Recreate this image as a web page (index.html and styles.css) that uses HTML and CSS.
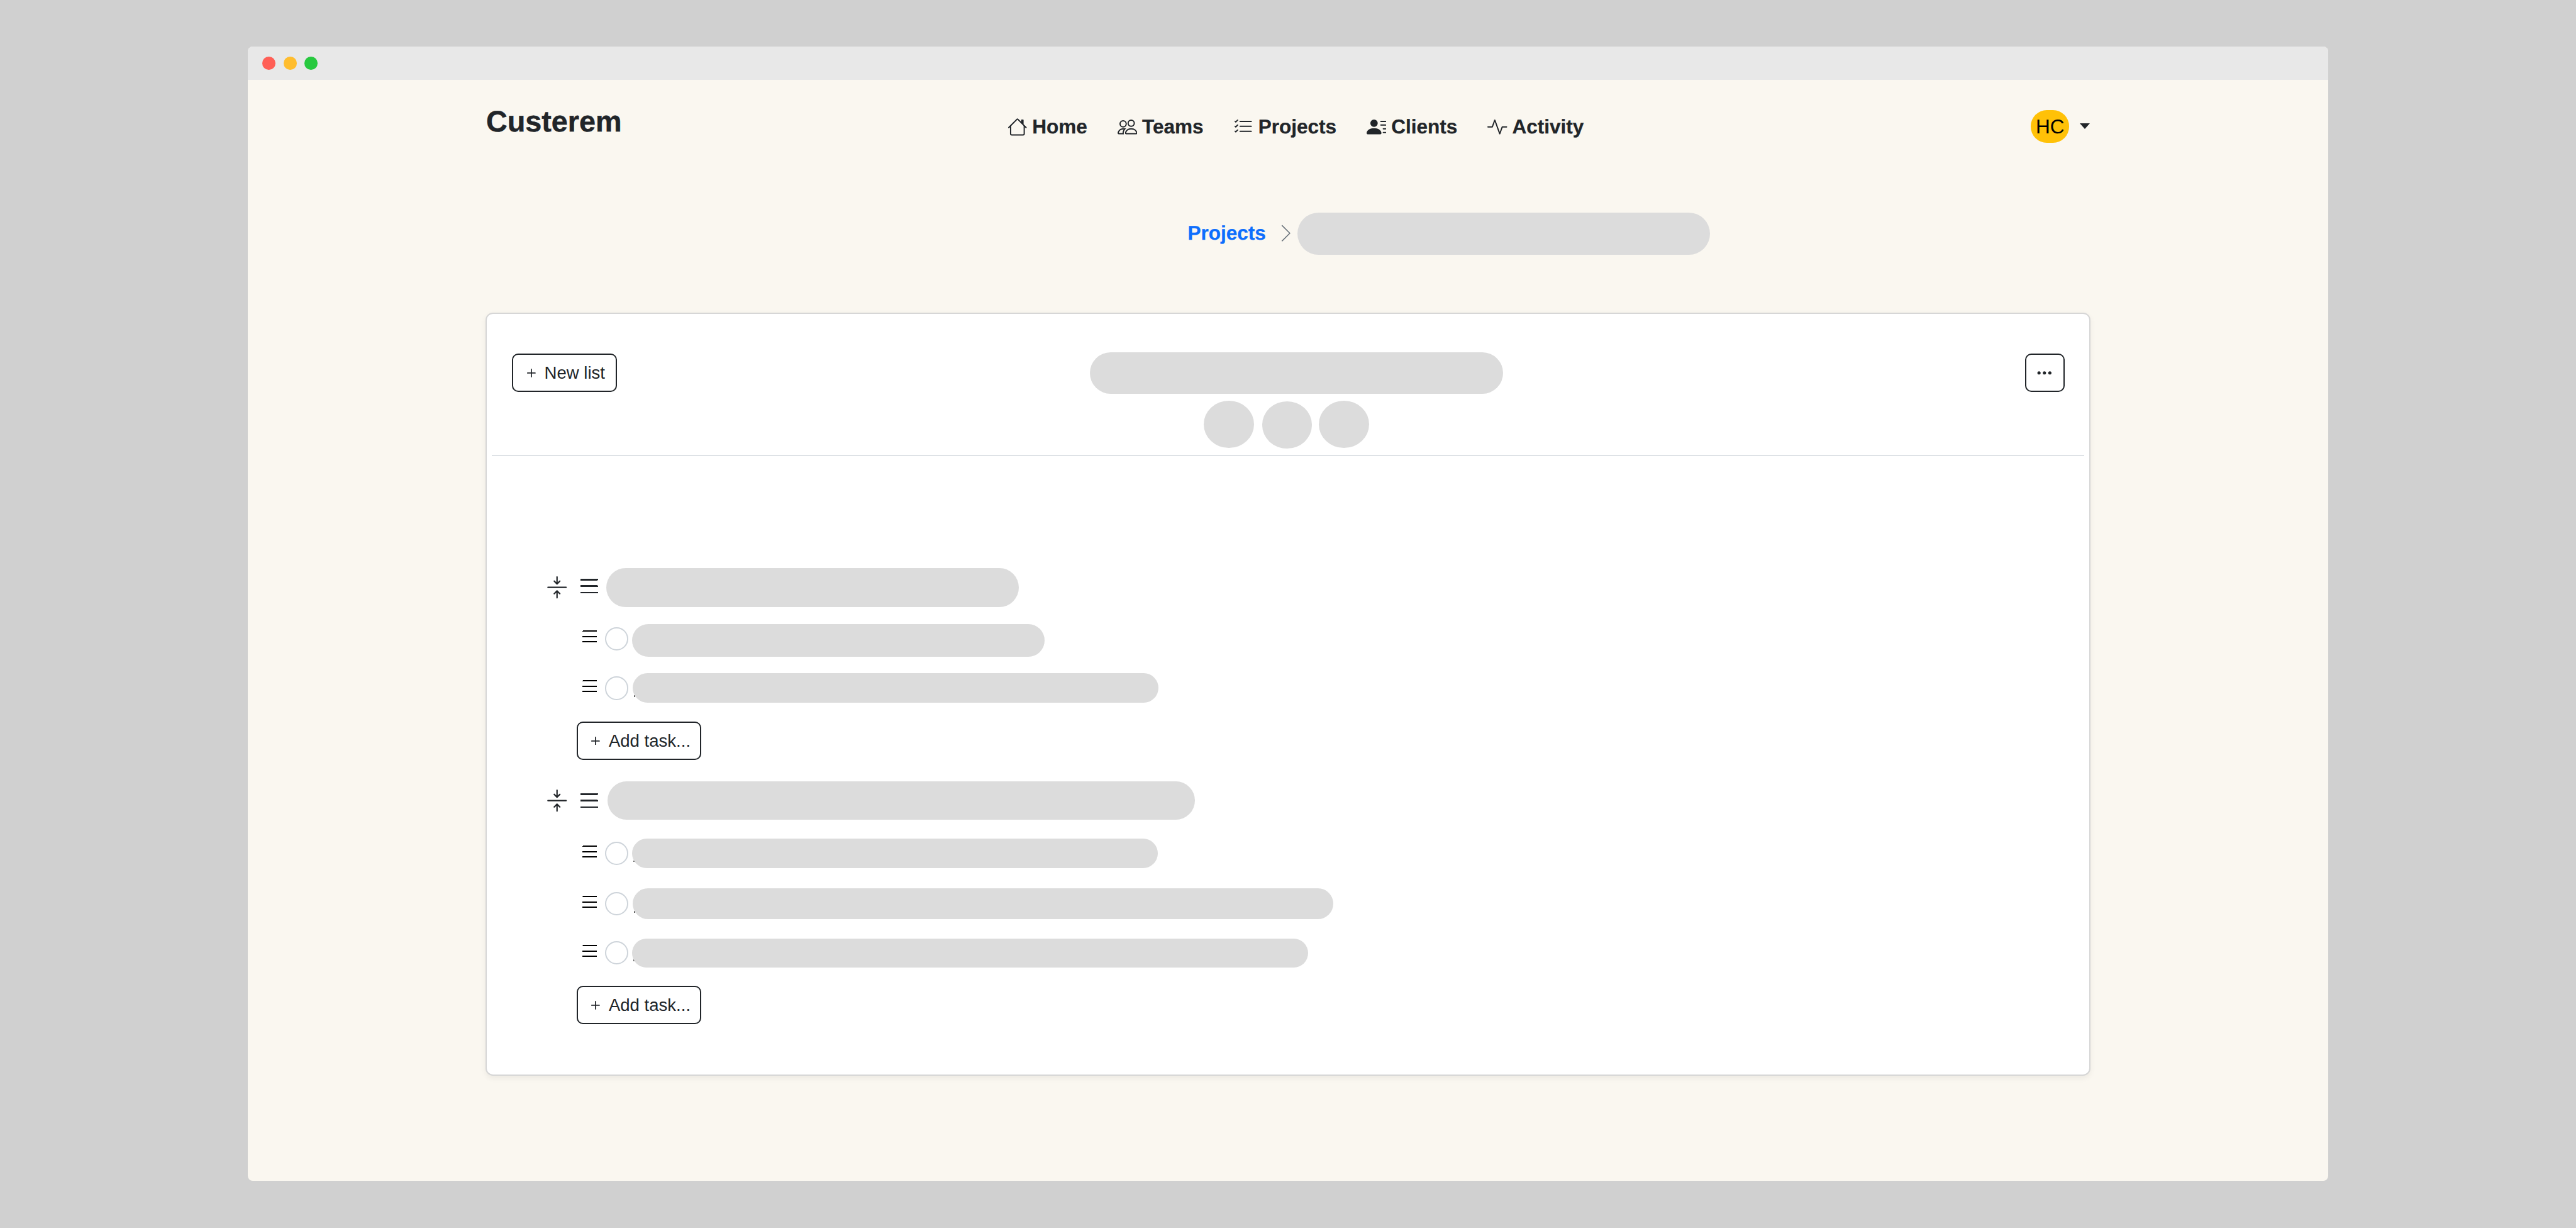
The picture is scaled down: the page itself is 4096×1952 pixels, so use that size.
FILE: index.html
```html
<!DOCTYPE html>
<html lang="en">
<head>
<meta charset="utf-8">
<title>Custerem</title>
<link rel="stylesheet" href="styles.css">
</head>
<body>
<div class="page">
  <div class="window">
    <div class="titlebar">
      <span class="light light-red"></span>
      <span class="light light-yellow"></span>
      <span class="light light-green"></span>
    </div>
    <div class="content">
      <header class="header">
        <div class="logo">Custerem</div>
        <nav class="nav">
          <a class="nav-item"><svg class="nav-icon" viewBox="0 0 16 16" fill="currentColor"><path d="M8.707 1.5a1 1 0 0 0-1.414 0L.646 8.146a.5.5 0 0 0 .708.708L2 8.207V13.5A1.5 1.5 0 0 0 3.5 15h9a1.5 1.5 0 0 0 1.5-1.5V8.207l.646.647a.5.5 0 0 0 .708-.708L13 5.793V2.5a.5.5 0 0 0-.5-.5h-1a.5.5 0 0 0-.5.5v1.293zM13 7.207V13.5a.5.5 0 0 1-.5.5h-9a.5.5 0 0 1-.5-.5V7.207l5-5z"/></svg>Home</a>
          <a class="nav-item"><svg class="nav-icon" viewBox="0 0 16 16" fill="currentColor"><path d="M15 14s1 0 1-1-1-4-5-4-5 3-5 4 1 1 1 1zm-7.978-1L7 12.996c.001-.264.167-1.03.76-1.72C8.312 10.629 9.282 10 11 10c1.717 0 2.687.63 3.24 1.276.593.69.758 1.457.76 1.72l-.008.002-.014.002H7.022ZM11 7a2 2 0 1 0 0-4 2 2 0 0 0 0 4m3-2a3 3 0 1 1-6 0 3 3 0 0 1 6 0M6.936 9.28a6 6 0 0 0-1.23-.247A7 7 0 0 0 5 9c-4 0-5 3-5 4q0 1 1 1h4.216A2.24 2.24 0 0 1 5 13c0-1.01.377-2.042 1.09-2.904.243-.294.526-.569.846-.816M4.92 10A5.5 5.5 0 0 0 4 13H1c0-.26.164-1.03.76-1.724.545-.636 1.492-1.256 3.16-1.275ZM1.5 5.5a3 3 0 1 1 6 0 3 3 0 0 1-6 0m3-2a2 2 0 1 0 0 4 2 2 0 0 0 0-4"/></svg>Teams</a>
          <a class="nav-item"><svg class="nav-icon" viewBox="0 0 16 16" fill="currentColor"><path fill-rule="evenodd" d="M5 11.5a.5.5 0 0 1 .5-.5h9a.5.5 0 0 1 0 1h-9a.5.5 0 0 1-.5-.5m0-4a.5.5 0 0 1 .5-.5h9a.5.5 0 0 1 0 1h-9a.5.5 0 0 1-.5-.5m0-4a.5.5 0 0 1 .5-.5h9a.5.5 0 0 1 0 1h-9a.5.5 0 0 1-.5-.5M3.854 2.146a.5.5 0 0 1 0 .708l-1.5 1.5a.5.5 0 0 1-.708 0l-.5-.5a.5.5 0 1 1 .708-.708L2 3.293l1.146-1.147a.5.5 0 0 1 .708 0m0 4a.5.5 0 0 1 0 .708l-1.5 1.5a.5.5 0 0 1-.708 0l-.5-.5a.5.5 0 1 1 .708-.708L2 7.293l1.146-1.147a.5.5 0 0 1 .708 0m0 4a.5.5 0 0 1 0 .708l-1.5 1.5a.5.5 0 0 1-.708 0l-.5-.5a.5.5 0 0 1 .708-.708l.146.147 1.146-1.147a.5.5 0 0 1 .708 0"/></svg>Projects</a>
          <a class="nav-item"><svg class="nav-icon" viewBox="0 0 16 16" fill="currentColor"><path d="M6 8a3 3 0 1 0 0-6 3 3 0 0 0 0 6m-5 6s-1 0-1-1 1-4 6-4 6 3 6 4-1 1-1 1zM11 3.5a.5.5 0 0 1 .5-.5h4a.5.5 0 0 1 0 1h-4a.5.5 0 0 1-.5-.5m.5 2.5a.5.5 0 0 0 0 1h4a.5.5 0 0 0 0-1zm2 3a.5.5 0 0 0 0 1h2a.5.5 0 0 0 0-1zm0 3a.5.5 0 0 0 0 1h2a.5.5 0 0 0 0-1z"/></svg>Clients</a>
          <a class="nav-item"><svg class="nav-icon" viewBox="0 0 16 16" fill="currentColor"><path fill-rule="evenodd" d="M6 2a.5.5 0 0 1 .47.33L10 12.036l1.53-4.208A.5.5 0 0 1 12 7.5h3.5a.5.5 0 0 1 0 1h-3.15l-1.88 5.17a.5.5 0 0 1-.94 0L6 3.964 4.47 8.171A.5.5 0 0 1 4 8.5H.5a.5.5 0 0 1 0-1h3.15l1.88-5.17A.5.5 0 0 1 6 2"/></svg>Activity</a>
        </nav>
        <div class="user">
          <span class="avatar">HC</span>
          <span class="caret"></span>
        </div>
      </header>

      <div class="breadcrumb">
        <a class="crumb-link">Projects</a>
        <svg class="crumb-chevron" viewBox="0 0 16 16" fill="none" stroke="currentColor" stroke-width="0.8"><path d="M4.7 1.6 11.1 8 4.7 14.4"/></svg>
        <div class="pill crumb-pill"></div>
      </div>

      <section class="card">
        <div class="card-head">
          <button class="btn btn-new"><svg class="plus" viewBox="4 4 8 8" fill="currentColor"><path d="M8 4a.5.5 0 0 1 .5.5v3h3a.5.5 0 0 1 0 1h-3v3a.5.5 0 0 1-1 0v-3h-3a.5.5 0 0 1 0-1h3v-3A.5.5 0 0 1 8 4"/></svg>New list</button>
          <div class="head-center">
            <div class="pill title-pill"></div>
            <div class="members">
              <span class="member"></span>
              <span class="member member-mid"></span>
              <span class="member"></span>
            </div>
          </div>
          <button class="btn btn-more"><svg class="dots" viewBox="0 0 16 16" fill="currentColor"><path d="M3 9.5a1.5 1.5 0 1 1 0-3 1.5 1.5 0 0 1 0 3m5 0a1.5 1.5 0 1 1 0-3 1.5 1.5 0 0 1 0 3m5 0a1.5 1.5 0 1 1 0-3 1.5 1.5 0 0 1 0 3"/></svg></button>
        </div>

        <div class="card-body">
          <div class="list-head list-head-raised">
            <svg class="collapse" viewBox="0 0 16 16" fill="currentColor"><path fill-rule="evenodd" d="M1 8a.5.5 0 0 1 .5-.5h13a.5.5 0 0 1 0 1h-13A.5.5 0 0 1 1 8m7-8a.5.5 0 0 1 .5.5v3.793l1.146-1.147a.5.5 0 0 1 .708.708l-2 2a.5.5 0 0 1-.708 0l-2-2a.5.5 0 1 1 .708-.708L7.5 4.293V.5A.5.5 0 0 1 8 0m-.5 11.707-1.146 1.147a.5.5 0 0 1-.708-.708l2-2a.5.5 0 0 1 .708 0l2 2a.5.5 0 0 1-.708.708L8.5 11.707V15.5a.5.5 0 0 1-1 0z"/></svg>
            <svg class="grip grip-head" viewBox="0 0 16 16" fill="currentColor"><path fill-rule="evenodd" d="M2.5 12a.5.5 0 0 1 .5-.5h10a.5.5 0 0 1 0 1H3a.5.5 0 0 1-.5-.5m0-4a.5.5 0 0 1 .5-.5h10a.5.5 0 0 1 0 1H3a.5.5 0 0 1-.5-.5m0-4a.5.5 0 0 1 .5-.5h10a.5.5 0 0 1 0 1H3a.5.5 0 0 1-.5-.5"/></svg>
            <div class="pill" style="width:666px;height:63px"></div>
          </div>

          <div class="task task-raised gap-28">
            <svg class="grip grip-task" viewBox="0 0 16 16" fill="currentColor"><path fill-rule="evenodd" d="M2.5 12a.5.5 0 0 1 .5-.5h10a.5.5 0 0 1 0 1H3a.5.5 0 0 1-.5-.5m0-4a.5.5 0 0 1 .5-.5h10a.5.5 0 0 1 0 1H3a.5.5 0 0 1-.5-.5m0-4a.5.5 0 0 1 .5-.5h10a.5.5 0 0 1 0 1H3a.5.5 0 0 1-.5-.5"/></svg>
            <span class="check"></span>
            <div class="pill" style="width:666px;height:52px"></div>
          </div>
          <div class="task gap-27">
            <svg class="grip grip-task" viewBox="0 0 16 16" fill="currentColor"><path fill-rule="evenodd" d="M2.5 12a.5.5 0 0 1 .5-.5h10a.5.5 0 0 1 0 1H3a.5.5 0 0 1-.5-.5m0-4a.5.5 0 0 1 .5-.5h10a.5.5 0 0 1 0 1H3a.5.5 0 0 1-.5-.5m0-4a.5.5 0 0 1 .5-.5h10a.5.5 0 0 1 0 1H3a.5.5 0 0 1-.5-.5"/></svg>
            <span class="check"></span>
            <div class="pill pill-speck pill-nudge" style="width:849px;height:48px"></div>
          </div>
          <button class="btn btn-add gap-30"><svg class="plus" viewBox="4 4 8 8" fill="currentColor"><path d="M8 4a.5.5 0 0 1 .5.5v3h3a.5.5 0 0 1 0 1h-3v3a.5.5 0 0 1-1 0v-3h-3a.5.5 0 0 1 0-1h3v-3A.5.5 0 0 1 8 4"/></svg>Add task...</button>

          <div class="list-head gap-35">
            <svg class="collapse" viewBox="0 0 16 16" fill="currentColor"><path fill-rule="evenodd" d="M1 8a.5.5 0 0 1 .5-.5h13a.5.5 0 0 1 0 1h-13A.5.5 0 0 1 1 8m7-8a.5.5 0 0 1 .5.5v3.793l1.146-1.147a.5.5 0 0 1 .708.708l-2 2a.5.5 0 0 1-.708 0l-2-2a.5.5 0 1 1 .708-.708L7.5 4.293V.5A.5.5 0 0 1 8 0m-.5 11.707-1.146 1.147a.5.5 0 0 1-.708-.708l2-2a.5.5 0 0 1 .708 0l2 2a.5.5 0 0 1-.708.708L8.5 11.707V15.5a.5.5 0 0 1-1 0z"/></svg>
            <svg class="grip grip-head" viewBox="0 0 16 16" fill="currentColor"><path fill-rule="evenodd" d="M2.5 12a.5.5 0 0 1 .5-.5h10a.5.5 0 0 1 0 1H3a.5.5 0 0 1-.5-.5m0-4a.5.5 0 0 1 .5-.5h10a.5.5 0 0 1 0 1H3a.5.5 0 0 1-.5-.5m0-4a.5.5 0 0 1 .5-.5h10a.5.5 0 0 1 0 1H3a.5.5 0 0 1-.5-.5"/></svg>
            <div class="pill pill-nudge-head" style="width:949px;height:61px"></div>
          </div>

          <div class="task gap-31">
            <svg class="grip grip-task" viewBox="0 0 16 16" fill="currentColor"><path fill-rule="evenodd" d="M2.5 12a.5.5 0 0 1 .5-.5h10a.5.5 0 0 1 0 1H3a.5.5 0 0 1-.5-.5m0-4a.5.5 0 0 1 .5-.5h10a.5.5 0 0 1 0 1H3a.5.5 0 0 1-.5-.5m0-4a.5.5 0 0 1 .5-.5h10a.5.5 0 0 1 0 1H3a.5.5 0 0 1-.5-.5"/></svg>
            <span class="check"></span>
            <div class="pill pill-speck" style="width:849px;height:48px"></div>
          </div>
          <div class="task gap-32">
            <svg class="grip grip-task" viewBox="0 0 16 16" fill="currentColor"><path fill-rule="evenodd" d="M2.5 12a.5.5 0 0 1 .5-.5h10a.5.5 0 0 1 0 1H3a.5.5 0 0 1-.5-.5m0-4a.5.5 0 0 1 .5-.5h10a.5.5 0 0 1 0 1H3a.5.5 0 0 1-.5-.5m0-4a.5.5 0 0 1 .5-.5h10a.5.5 0 0 1 0 1H3a.5.5 0 0 1-.5-.5"/></svg>
            <span class="check"></span>
            <div class="pill pill-speck pill-nudge" style="width:1131px;height:50px"></div>
          </div>
          <div class="task gap-31">
            <svg class="grip grip-task" viewBox="0 0 16 16" fill="currentColor"><path fill-rule="evenodd" d="M2.5 12a.5.5 0 0 1 .5-.5h10a.5.5 0 0 1 0 1H3a.5.5 0 0 1-.5-.5m0-4a.5.5 0 0 1 .5-.5h10a.5.5 0 0 1 0 1H3a.5.5 0 0 1-.5-.5m0-4a.5.5 0 0 1 .5-.5h10a.5.5 0 0 1 0 1H3a.5.5 0 0 1-.5-.5"/></svg>
            <span class="check"></span>
            <div class="pill pill-speck" style="width:1092px;height:47px"></div>
          </div>
          <button class="btn btn-add gap-30"><svg class="plus" viewBox="4 4 8 8" fill="currentColor"><path d="M8 4a.5.5 0 0 1 .5.5v3h3a.5.5 0 0 1 0 1h-3v3a.5.5 0 0 1-1 0v-3h-3a.5.5 0 0 1 0-1h3v-3A.5.5 0 0 1 8 4"/></svg>Add task...</button>
        </div>
      </section>
    </div>
  </div>
</div>
</body>
</html>
```
FILE: styles.css
```css
* { box-sizing: border-box; }

html, body {
  margin: 0;
  padding: 0;
  overflow: hidden;
  background: #d0d0d0;
}

.page {
  zoom: 0.98462;
  width: 4160px;
  height: 1982px;
  padding: 75px 400px 76px;
  font-family: "Liberation Sans", Arial, sans-serif;
  color: #212529;
  text-rendering: geometricPrecision;
}

.window {
  height: 100%;
  background: #faf7f0;
  border-radius: 8px;
  overflow: hidden;
}

.titlebar {
  height: 54px;
  background: #e8e8e8;
  display: flex;
  align-items: center;
  gap: 13px;
  padding-left: 24px;
}

.light {
  width: 21px;
  height: 21px;
  border-radius: 50%;
}
.light-red { background: #ff5f56; }
.light-yellow { background: #ffbd2e; }
.light-green { background: #27c93f; }

.content { padding: 0 385px; }

.header {
  display: flex;
  align-items: flex-start;
  padding-top: 39px;
  height: 214px;
}

.logo {
  font-size: 47.5px;
  font-weight: 700;
  line-height: 58px;
  -webkit-text-stroke: 0.5px #212529;
}

.nav {
  display: flex;
  gap: 48.6px;
  margin-left: 623px;
  margin-top: 17px;
}

.nav-item {
  display: flex;
  align-items: center;
  gap: 8px;
  font-size: 32px;
  font-weight: 700;
  line-height: 40px;
  -webkit-text-stroke: 0.3px #212529;
}

.nav-icon {
  width: 32px;
  height: 32px;
  flex: none;
}

.user {
  margin-left: auto;
  margin-top: 10px;
  display: flex;
  align-items: center;
  gap: 17px;
}

.avatar {
  width: 62px;
  height: 53px;
  border-radius: 26px;
  background: #ffc107;
  color: #000;
  font-size: 32px;
  line-height: 53px;
  text-align: center;
}

.caret {
  width: 0;
  height: 0;
  margin-bottom: 1px;
  border-top: 10px solid #212529;
  border-left: 9px solid transparent;
  border-right: 9px solid transparent;
}

.breadcrumb {
  display: flex;
  align-items: center;
  height: 68px;
  margin-left: 1133px;
}

.crumb-link {
  color: #0d6efd;
  font-size: 32px;
  font-weight: 700;
  line-height: 40px;
  -webkit-text-stroke: 0.3px #0d6efd;
}

.crumb-chevron {
  width: 32px;
  height: 32px;
  margin-left: 16px;
  margin-right: 3px;
  color: #6c757d;
  flex: none;
}

.pill {
  background: #dcdcdc;
  border-radius: 40px;
  flex: none;
}

.crumb-pill {
  width: 666px;
  height: 68px;
}

.card {
  position: relative;
  isolation: isolate;
  height: 1232px;
  margin: 94px -1px 0;
  background: #fff;
  border: 2.2px solid #d6d6d6;
  border-radius: 12px;
  box-shadow: 0 4px 10px rgba(0, 0, 0, 0.06);
}

.card-head {
  display: flex;
  align-items: flex-start;
  height: 229px;
  margin: 0 8px;
  padding: 62px 32px 0 33px;
  border-bottom: 2.2px solid #dee2e6;
}

.head-center {
  margin-left: 764px;
}

.title-pill {
  width: 667px;
  height: 67px;
}

.members {
  display: flex;
  margin-top: 11px;
  margin-left: 184px;
}

.member {
  width: 81px;
  height: 76px;
  border-radius: 50%;
  background: #dcdcdc;
}

.member-mid {
  margin: 1px 11px 0 13px;
}

.btn {
  display: flex;
  align-items: center;
  height: 62px;
  padding: 0;
  background: #fff;
  border: 2.2px solid #212529;
  border-radius: 10px;
  color: #212529;
  font-family: inherit;
  font-size: 28px;
  line-height: 40px;
  flex: none;
}

.plus {
  width: 14px;
  height: 14px;
  margin-right: 14px;
  flex: none;
}

.btn-new {
  width: 169px;
  margin-top: 2px;
  padding-left: 22px;
}

.btn-more {
  width: 64px;
  margin-top: 2px;
  margin-left: auto;
  justify-content: center;
}

.dots {
  width: 28px;
  height: 28px;
}

.btn-add {
  width: 201px;
  margin-left: 49px;
  padding-left: 22px;
}

.card-body {
  padding: 181px 0 0 96px;
}

.list-head,
.task {
  display: flex;
  align-items: center;
}

.collapse {
  width: 36px;
  height: 36px;
  margin-right: 13px;
  flex: none;
}

.grip {
  flex: none;
  shape-rendering: crispEdges;
}

.grip-head {
  width: 42px;
  height: 42px;
  margin-left: -1px;
  margin-right: 7px;
}

.list-head-raised .grip-head { margin-bottom: 5px; }

.task { margin-left: 54px; }

.grip-task {
  width: 34px;
  height: 34px;
  margin-left: -1px;
  margin-right: 8px;
  margin-bottom: 6px;
  color: #000;
}

.check {
  width: 38px;
  height: 38px;
  margin-right: 6px;
  background: #fff;
  border: 2.2px solid #ced4da;
  border-radius: 50%;
  flex: none;
}

.task-raised .grip-task { margin-bottom: 13px; }
.task-raised .check { margin-bottom: 5px; }

.pill-nudge { margin-left: 1px; }
.pill-nudge-head { margin-left: 2px; }

.pill-speck { position: relative; }
.pill-speck::before {
  content: "";
  position: absolute;
  z-index: -1;
  left: 2px;
  bottom: 10px;
  width: 2px;
  height: 3px;
  background: #666;
}

.gap-27 { margin-top: 27px; }
.gap-28 { margin-top: 28px; }
.gap-30 { margin-top: 30px; }
.gap-31 { margin-top: 31px; }
.gap-32 { margin-top: 32px; }
.gap-35 { margin-top: 35px; }
```
